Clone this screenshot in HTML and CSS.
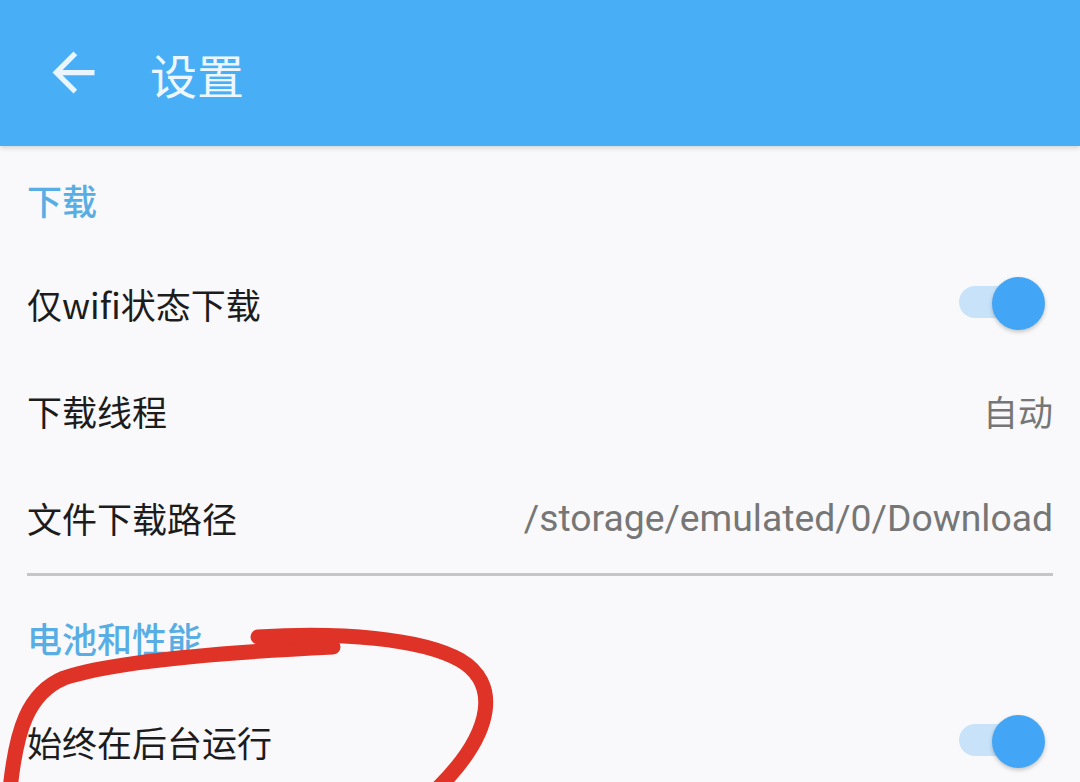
FILE: index.html
```html
<!DOCTYPE html>
<html lang="zh-CN">
<head>
    <meta charset="UTF-8">
    <meta name="viewport" content="width=device-width, initial-scale=1.0">
    <title>设置</title>
    <link rel="stylesheet" href="styles.css">
</head>
<body>
    <div class="toolbar">
        <svg class="back" viewBox="0 0 24 24" width="63" height="63">
            <path d="M20 11H7.83l5.59-5.59L12 4l-8 8 8 8 1.41-1.41L7.83 13H20v-2z" fill="#eaf5fe"/>
        </svg>
        <div class="toolbar-title">设置</div>
    </div>

    <div class="content">
        <!-- 下载 -->
        <div class="section-title">下载</div>
        <div class="row">
            <span class="label">仅wifi状态下载</span>
            <div class="switch"><div class="track"></div><div class="thumb"></div></div>
        </div>
        <div class="row">
            <span class="label">下载线程</span>
            <span class="value">自动</span>
        </div>
        <div class="row">
            <span class="label">文件下载路径</span>
            <span class="value path">/storage/emulated/0/Download</span>
        </div>
        <div class="divider"></div>

        <!-- 电池和性能 -->
        <div class="section-title">电池和性能</div>
        <div class="row">
            <span class="label">始终在后台运行</span>
            <div class="switch"><div class="track"></div><div class="thumb"></div></div>
        </div>
    </div>

    <!-- 红色手绘圈 -->
    <svg class="scribble" width="1080" height="782" viewBox="0 0 1080 782">
        <path d="M333 647 C250 651, 120 659, 64 678 C28 693, 16 730, 10 790" />
        <path d="M258 637 C340 632, 420 638, 460 660 C498 682, 497 730, 436 790" />
    </svg>
</body>
</html>
```

FILE: styles.css
```css
html, body {
    margin: 0;
    padding: 0;
}
body {
    width: 1080px;
    height: 782px;
    overflow: hidden;
    background-color: #f9f9fb;
    font-family: "Noto Sans CJK SC", "Noto Sans", sans-serif;
    color: #1c1c1c;
    position: relative;
}
.toolbar {
    height: 146px;
    background-color: #48aef6;
    display: flex;
    align-items: center;
    padding-left: 42px;
    box-shadow: 0 2px 5px rgba(0, 0, 0, 0.15);
    position: relative;
}
.back {
    display: block;
    margin-top: -2px;
}
.toolbar-title {
    margin-left: 45px;
    font-size: 47px;
    color: #eef7fe;
    line-height: 1;
}
.content {
    padding: 0 27px 0 27px;
}
.section-title {
    height: 104px;
    box-sizing: border-box;
    padding-top: 34px;
    line-height: 40px;
    font-size: 35px;
    font-weight: 500;
    color: #58aee4;
}
.row {
    height: 107px;
    display: flex;
    align-items: center;
    justify-content: space-between;
}
.label {
    font-size: 35px;
    color: #1c1c1c;
}
.value {
    font-size: 35px;
    color: #767676;
}
.path {
    font-family: Roboto, "Noto Sans", sans-serif;
    font-size: 37.3px;
}
.divider {
    height: 3px;
    background: #c6c6c8;
    margin: 2px 0 8px 0;
}
.switch {
    position: relative;
    width: 86px;
    height: 54px;
    margin-right: 8px;
}
.track {
    position: absolute;
    left: 0;
    top: 9px;
    width: 72px;
    height: 32px;
    border-radius: 16px;
    background: #c8e3f9;
}
.thumb {
    position: absolute;
    right: 0;
    top: 0;
    width: 53px;
    height: 53px;
    border-radius: 50%;
    background: #42a5f5;
    box-shadow: 0 2px 4px rgba(0, 0, 0, 0.22);
}
.scribble {
    position: absolute;
    left: 0;
    top: 0;
    pointer-events: none;
}
.scribble path {
    fill: none;
    stroke: #df3328;
    stroke-width: 15;
    stroke-linecap: round;
}
```
